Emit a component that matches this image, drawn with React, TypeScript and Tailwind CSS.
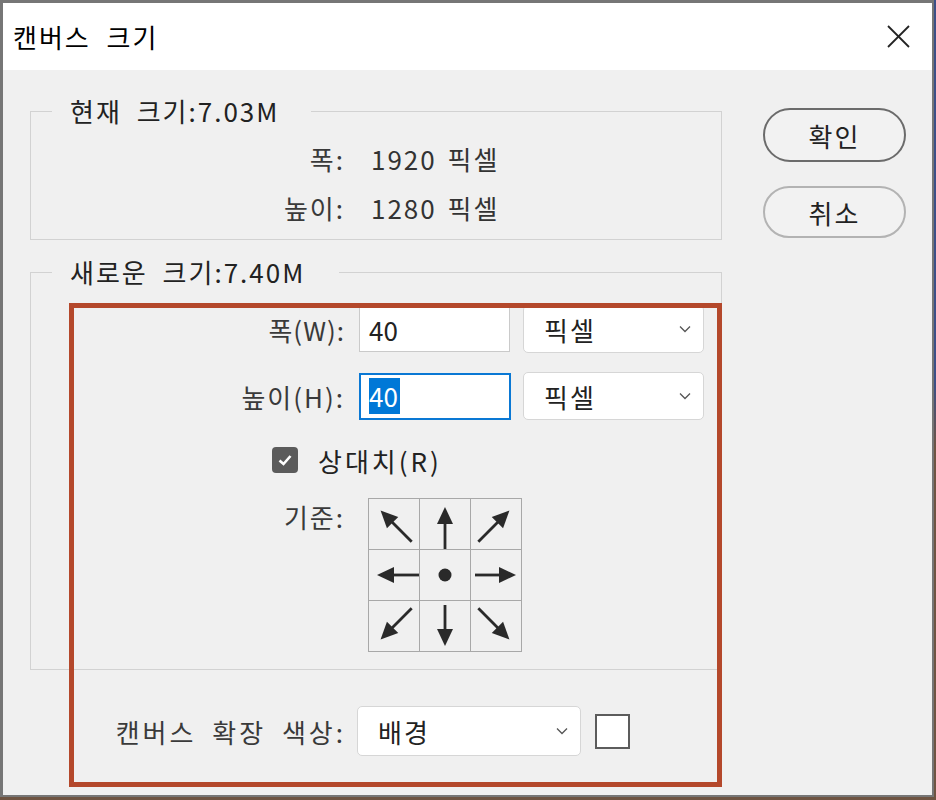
import React from "react";

function Arrow({ rot, x1, tip }: { rot: number; x1: number; tip: number }) {
  return (
    <svg width="50" height="50" viewBox="0 0 50 50">
      <g transform={`rotate(${rot} 25 25)`}>
        <line x1={x1} y1={25} x2={tip - 12} y2={25} stroke="#2a2a2a" strokeWidth={2.8} />
        <polygon points={`${tip},25 ${tip - 17},17 ${tip - 17},33`} fill="#2a2a2a" />
      </g>
    </svg>
  );
}

function Chevron() {
  return (
    <svg width="12" height="8" viewBox="0 0 12 8">
      <polyline points="1,1.5 6,6.5 11,1.5" fill="none" stroke="#555" strokeWidth={1.3} />
    </svg>
  );
}

function Select({ label, w, h }: { label: string; w: string; h: string }) {
  return (
    <div
      className={`${w} ${h} rounded-[5px] border border-[#d6d6d6] bg-white flex items-center justify-between pl-[20px] pr-[12px] text-[26px] tracking-[2px] text-[#222]`}
    >
      <span>{label}</span>
      <Chevron />
    </div>
  );
}

export default function App() {
  const cells = [
    <Arrow key="nw" rot={-135} x1={0} tip={44} />,
    <Arrow key="n" rot={-90} x1={0} tip={42} />,
    <Arrow key="ne" rot={-45} x1={0} tip={44} />,
    <Arrow key="w" rot={180} x1={0} tip={42} />,
    <svg key="c" width="50" height="50" viewBox="0 0 50 50">
      <circle cx={25} cy={25} r={6.5} fill="#2a2a2a" />
    </svg>,
    <Arrow key="e" rot={0} x1={4} tip={45} />,
    <Arrow key="sw" rot={135} x1={0} tip={44} />,
    <Arrow key="s" rot={90} x1={4} tip={45} />,
    <Arrow key="se" rot={45} x1={0} tip={44} />,
  ];

  return (
    <div className="w-[936px] h-[800px] overflow-hidden bg-[linear-gradient(to_bottom,#3c4f86_0%,#3c4f86_48%,#6e5442_56%,#6e5442_100%)] font-['Noto_Sans_CJK_KR','Noto_Sans',sans-serif]">
      <div className="relative w-[934px] h-[797px] border-t-[3px] border-l-[3px] border-r-[2px] border-b-[2px] border-[#767676] bg-[#f0f0f0] flex flex-col">
        {/* Title bar */}
        <div className="h-[67px] bg-white flex items-center justify-between pl-[10px] pr-[22px]">
          <span className="text-[26px] tracking-[2px] [word-spacing:8px] text-black leading-none">캔버스 크기</span>
          <svg width="23" height="23" viewBox="0 0 23 23">
            <line x1="1" y1="1" x2="22" y2="22" stroke="#222" strokeWidth={1.8} />
            <line x1="22" y1="1" x2="1" y2="22" stroke="#222" strokeWidth={1.8} />
          </svg>
        </div>

        {/* Body */}
        <div className="flex-1 flex pl-[27px] pt-[26px] text-[26px] tracking-[2px] [word-spacing:7px]">
          <div className="w-[692px] flex flex-col">
            {/* Current size */}
            <fieldset className="border border-[#d2d2d2]">
              <legend className="ml-[21px] pl-[18px] pr-[32px] leading-[30px] text-[#222]">
                현재 크기:7.03M
              </legend>
              <div className="flex flex-col pt-[12px] pb-[12px] gap-[9px]">
                <div className="h-[40px] flex items-center">
                  <span className="w-[314px] text-right text-[#3a3a3a]">폭:</span>
                  <span className="ml-[26px] text-[#333] [word-spacing:3px]">1920 픽셀</span>
                </div>
                <div className="h-[40px] flex items-center">
                  <span className="w-[314px] text-right text-[#3a3a3a]">높이:</span>
                  <span className="ml-[26px] text-[#333] [word-spacing:3px]">1280 픽셀</span>
                </div>
              </div>
            </fieldset>

            {/* New size */}
            <fieldset className="mt-[17px] border border-[#d2d2d2]">
              <legend className="ml-[21px] pl-[18px] pr-[34px] leading-[30px] text-[#222]">
                새로운 크기:7.40M
              </legend>
              <div className="flex flex-col pt-[18px] pb-[17px]">
                <div className="h-[48px] flex items-center">
                  <span className="w-[314px] text-right text-[#3a3a3a] tracking-[1px]">폭(W):</span>
                  <div className="ml-[14px] w-[151px] h-[46px] border border-[#cacaca] bg-white flex items-center pl-[9px] text-[#222] tracking-normal">
                    40
                  </div>
                  <div className="ml-[13px]">
                    <Select label="픽셀" w="w-[181px]" h="h-[48px]" />
                  </div>
                </div>
                <div className="mt-[19px] h-[48px] flex items-center">
                  <span className="w-[314px] text-right text-[#3a3a3a]">높이(H):</span>
                  <div className="ml-[14px] w-[152px] h-[47px] border-2 border-[#0a78d4] bg-white flex items-center pl-[8px] tracking-normal">
                    <span className="bg-[#0078d7] text-white leading-[36px] pr-[2px]">40</span>
                  </div>
                  <div className="ml-[12px]">
                    <Select label="픽셀" w="w-[181px]" h="h-[48px]" />
                  </div>
                </div>
                <div className="mt-[25px] h-[30px] flex items-center">
                  <div className="ml-[241px] w-[26px] h-[26px] rounded-[4px] bg-[#5b5b5b] flex items-center justify-center">
                    <svg width="16" height="16" viewBox="0 0 16 16">
                      <polyline points="2.5,8.5 6.5,12 13.5,4" fill="none" stroke="white" strokeWidth={2.6} />
                    </svg>
                  </div>
                  <span className="ml-[20px] text-[#222] tracking-[3px]">상대치(R)</span>
                </div>
                <div className="mt-[23px] flex items-start">
                  <span className="w-[314px] text-right text-[#3a3a3a] leading-[30px] pt-[4px]">기준:</span>
                  <div className="ml-[23px] grid grid-cols-[repeat(3,51px)] border-l border-t border-[#a8a8a8]">
                    {cells.map((c, i) => (
                      <div key={i} className="w-[51px] h-[51px] border-r border-b border-[#a8a8a8] flex items-center justify-center">
                        {c}
                      </div>
                    ))}
                  </div>
                </div>
              </div>
            </fieldset>

            {/* Canvas extension color */}
            <div className="mt-[36px] h-[50px] flex items-center">
              <span className="w-[316px] text-right text-[#3a3a3a] tracking-[3px]">캔버스 확장 색상:</span>
              <div className="ml-[11px]">
                <Select label="배경" w="w-[224px]" h="h-[50px]" />
              </div>
              <div className="ml-[14px] w-[35px] h-[35px] border-2 border-[#5c5c5c] bg-white" />
            </div>
          </div>

          {/* Buttons */}
          <div className="ml-[41px] w-[143px] flex flex-col pt-[12px]">
            <button className="h-[54px] w-[143px] rounded-full border-2 border-[#6b6b6b] bg-[#f2f2f2] text-[26px] tracking-[2px] text-[#222]">
              확인
            </button>
            <button className="mt-[24px] h-[52px] w-[143px] rounded-full border-2 border-[#b3b3b3] bg-[#f2f2f2] text-[26px] tracking-[2px] text-[#222]">
              취소
            </button>
          </div>
        </div>

        {/* Annotation overlay */}
        <div className="absolute left-[66px] top-[300px] w-[653px] h-[484px] border-[5px] border-[#b4482b] pointer-events-none" />
      </div>
    </div>
  );
}
